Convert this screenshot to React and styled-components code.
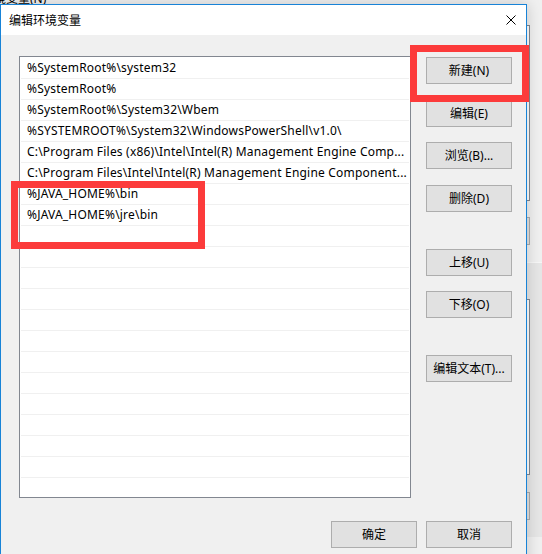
import React from "react";
import styled, { createGlobalStyle } from "styled-components";

const uiFont = `"Noto Sans", "Noto Sans CJK SC", sans-serif`;

const GlobalStyle = createGlobalStyle`
  html, body {
    margin: 0;
    padding: 0;
  }
  body {
    width: 542px;
    height: 554px;
    overflow: hidden;
    background: #f0f0f0;
    font-family: ${uiFont};
    font-size: 12px;
    color: #000;
  }
`;

const Desktop = styled.div`
  position: relative;
  width: 542px;
  height: 554px;
  overflow: hidden;
  background: #f0f0f0;
`;

/* the parent "环境变量" window, mostly hidden under the dialog */
const ParentWindow = styled.div`
  display: flex;
  flex-direction: column;
  width: 100%;
  height: 100%;
`;

const ParentPane = styled.div`
  display: flex;
  flex-direction: column;
  align-items: flex-end;
  height: ${(p) => p.$height}px;
  padding-right: 12px;
  background: ${(p) => (p.$shaded ? "#e6e6e6" : "#f0f0f0")};
  border-top: ${(p) => (p.$shaded ? "1px solid #f7f7f7" : "none")};
  box-sizing: border-box;
`;

const ParentCaption = styled.div`
  align-self: flex-start;
  margin: -9px 0 0 -18px;
  line-height: 16px;
  white-space: nowrap;
`;

const ParentList = styled.div`
  width: 300px;
  height: 176px;
  margin-top: ${(p) => p.$top}px;
  background: #fff;
  border: 1px solid #828790;
  box-sizing: border-box;
`;

const ParentButton = styled.div`
  width: 86px;
  height: 28px;
  margin-top: ${(p) => p.$top}px;
  background: #e1e1e1;
  border: 1px solid #adadad;
  box-sizing: border-box;
`;

const ParentFooter = styled.div`
  flex: 1;
  background: #f0f0f0;
`;

/* the dialog itself */
const Dialog = styled.div`
  position: absolute;
  left: 0;
  top: 4px;
  width: 527px;
  height: 570px;
  display: flex;
  flex-direction: column;
  background: #f0f0f0;
  border: 1px solid #1883d7;
  box-sizing: border-box;
  box-shadow: 0 0 14px rgba(0, 0, 0, 0.18);
`;

const TitleBar = styled.div`
  display: flex;
  align-items: center;
  justify-content: space-between;
  height: 30px;
  padding: 0 10px 0 8px;
  background: #fff;
  flex-shrink: 0;
`;

const Title = styled.span`
  font-size: 12px;
  line-height: 16px;
  padding-top: 1px;
`;

const CloseIcon = styled.svg`
  width: 10px;
  height: 10px;
  display: block;
`;

const Body = styled.div`
  display: grid;
  grid-template-columns: 392px 86px;
  column-gap: 15px;
  padding: 21px 14px 0 18px;
`;

const PathList = styled.div`
  height: 442px;
  padding-top: 1px;
  background: #fff;
  border: 1px solid #828790;
  box-sizing: border-box;
  overflow: hidden;
`;

const PathRow = styled.div`
  height: 21px;
  margin: 0 1px;
  padding-left: 6px;
  border-bottom: 1px solid #f0f0f0;
  box-sizing: border-box;
  line-height: 20px;
  letter-spacing: 0.2px;
  white-space: nowrap;
  overflow: hidden;
`;

const SideButtons = styled.div`
  display: flex;
  flex-direction: column;
  padding-top: 1px;
`;

const Button = styled.button`
  width: 86px;
  height: 27px;
  margin-top: ${(p) => p.$gap || 0}px;
  padding: 0;
  background: #e1e1e1;
  border: 1px solid #adadad;
  box-sizing: border-box;
  font-family: ${uiFont};
  font-size: 12px;
  color: #000;
  line-height: 25px;
  white-space: nowrap;
`;

const Footer = styled.div`
  grid-column: 1 / -1;
  display: flex;
  justify-content: flex-end;
  gap: 9px;
  margin-top: 23px;
`;

/* red highlight boxes drawn over the screenshot */
const Highlight = styled.div`
  position: absolute;
  left: ${(p) => p.$x}px;
  top: ${(p) => p.$y}px;
  width: ${(p) => p.$w}px;
  height: ${(p) => p.$h}px;
  border: 7px solid #fc3b3b;
  box-sizing: border-box;
  pointer-events: none;
`;

const paths = [
  "%SystemRoot%\\system32",
  "%SystemRoot%",
  "%SystemRoot%\\System32\\Wbem",
  "%SYSTEMROOT%\\System32\\WindowsPowerShell\\v1.0\\",
  "C:\\Program Files (x86)\\Intel\\Intel(R) Management Engine Comp...",
  "C:\\Program Files\\Intel\\Intel(R) Management Engine Component...",
  "%JAVA_HOME%\\bin",
  "%JAVA_HOME%\\jre\\bin",
];

const rows = [...paths, ...Array(21 - paths.length).fill("")];

const sideButtons = [
  { label: "新建(N)", gap: 0 },
  { label: "编辑(E)", gap: 16 },
  { label: "浏览(B)...", gap: 15 },
  { label: "删除(D)", gap: 16 },
  { label: "上移(U)", gap: 37 },
  { label: "下移(O)", gap: 15 },
  { label: "编辑文本(T)...", gap: 37 },
];

export default function App() {
  return (
    <>
      <GlobalStyle />
      <Desktop>
        <ParentWindow>
          <ParentPane $height={262}>
            <ParentCaption>环境变量(N)</ParentCaption>
            <ParentList $top={18} />
            <ParentButton $top={16} />
          </ParentPane>
          <ParentPane $height={275} $shaded>
            <ParentList $top={36} />
            <ParentButton $top={17} />
          </ParentPane>
          <ParentFooter />
        </ParentWindow>

        <Dialog>
          <TitleBar>
            <Title>编辑环境变量</Title>
            <CloseIcon viewBox="0 0 10 10">
              <path d="M0.5 0.5 L9.5 9.5 M9.5 0.5 L0.5 9.5" stroke="#000" strokeWidth="1" />
            </CloseIcon>
          </TitleBar>
          <Body>
            <PathList>
              {rows.map((p, i) => (
                <PathRow key={i}>{p}</PathRow>
              ))}
            </PathList>
            <SideButtons>
              {sideButtons.map((b) => (
                <Button key={b.label} $gap={b.gap}>
                  {b.label}
                </Button>
              ))}
            </SideButtons>
            <Footer>
              <Button>确定</Button>
              <Button>取消</Button>
            </Footer>
          </Body>
        </Dialog>

        <Highlight $x={410} $y={45} $w={119} $h={57} />
        <Highlight $x={11} $y={181} $w={194} $h={68} />
      </Desktop>
    </>
  );
}
